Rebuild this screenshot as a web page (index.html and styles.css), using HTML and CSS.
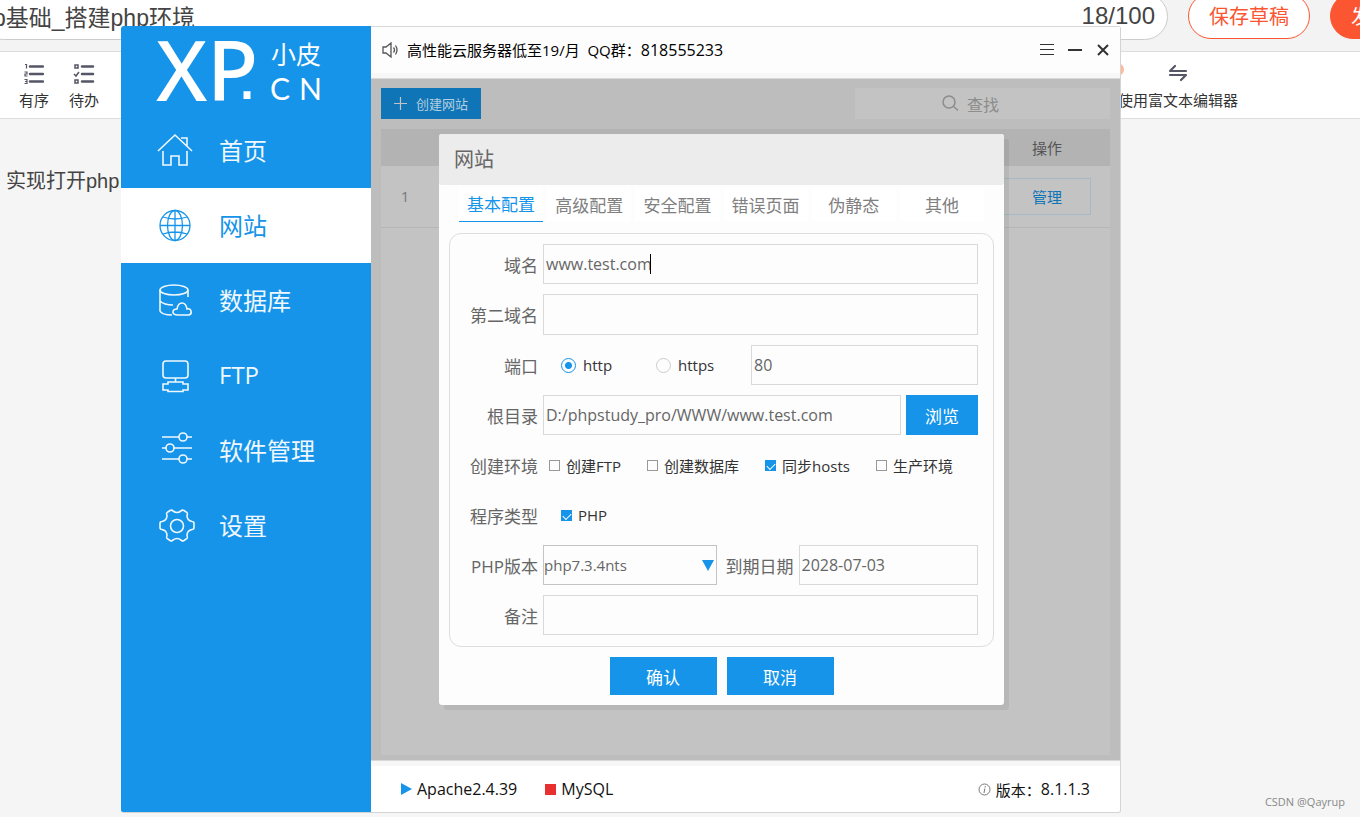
FILE: index.html
```html
<!DOCTYPE html>
<html lang="zh-CN">
<head>
<meta charset="utf-8">
<title>小皮面板 - 网站</title>
<link rel="stylesheet" href="styles.css">
</head>
<body>
<div class="editor">
  <header class="editor-head">
    <div class="title-box">
      <input class="title-input" type="text" aria-label="文章标题" value="p基础_搭建php环境">
      <span class="title-count">18/100</span>
    </div>
    <button class="pill" type="button">保存草稿</button>
    <button class="pill pill-solid" type="button">发布文章</button>
  </header>
  <div class="toolbar">
    <button class="tool" type="button">
      <svg width="20" height="22" viewBox="0 0 20 22" fill="none" stroke="#555666" stroke-width="2"><path d="M6 3.500h13M6 11h13M6 18.500h13" stroke-linecap="round" stroke-width="2.500"/><path d="M1 1.500h1.500v4M.5 9H3v2H1v2h2.500M.5 16.500H3v4H.5M1 18.500h2" stroke-width="1.200"/></svg>
      <span>有序</span>
    </button>
    <button class="tool" type="button">
      <svg width="22" height="22" viewBox="0 0 22 22" fill="none" stroke="#555666"><path d="M9 3.500h11M9 11h11M9 18.500h11" stroke-linecap="round" stroke-width="2.500"/><path d="M2 2h3v3H2zM2 17h3v3H2zM1 11l2 2 3-4" stroke-width="1.500"/></svg>
      <span>待办</span>
    </button>
    <i class="badge"></i>
    <button class="tool tool-switch" type="button">
      <svg width="20" height="22" viewBox="0 0 20 22" fill="none" stroke="#555666" stroke-width="2.200" stroke-linecap="round" stroke-linejoin="round"><path d="M18 8H2l5-5M2 12h16l-5 5"/></svg>
      <span>使用富文本编辑器</span>
    </button>
  </div>
  <p class="editor-text">实现打开php</p>
</div>

<div class="app">
  <aside class="side">
    <svg class="logo" viewBox="0 0 250 87" role="img" aria-label="XP.CN 小皮">
      <g fill="#fff">
        <text class="logo-xp" x="35 86" y="75">XP</text>
        <text class="logo-dot" x="116" y="73">.</text>
        <text class="logo-cjk" x="150" y="38">小皮</text>
        <text class="logo-cn" x="149 178" y="74">CN</text>
      </g>
    </svg>
    <nav class="nav">
      <a class="nav-item" href="#home">
        <svg class="nav-icon" viewBox="0 0 36 36"><path d="M1 19 18 3l17 16M6 19v14h8v-9h8v9h8V19M24 6h6v8"/></svg>
        首页
      </a>
      <a class="nav-item nav-on" href="#site">
        <svg class="nav-icon" viewBox="0 0 36 36"><circle cx="18" cy="18.500" r="15"/><ellipse cx="18" cy="18.500" rx="7.500" ry="15"/><path d="M18 3.500v30M3 18.500h30M6 10q12 4 24 0M6 27q12-4 24 0"/></svg>
        网站
      </a>
      <a class="nav-item" href="#db">
        <svg class="nav-icon" viewBox="0 0 36 36"><ellipse cx="17" cy="8" rx="14" ry="5"/><path d="M3 8v21q2 4 12 4M31 8v7M3 19q4 4 13 4M21 33h11q3-1 2-4-1-3-4-2-1-6-5-6t-5 6q-4 0-4 3t5 3z"/></svg>
        数据库
      </a>
      <a class="nav-item" href="#ftp">
        <svg class="nav-icon" viewBox="0 0 36 36"><rect x="6" y="4" width="25" height="17" rx="3"/><path d="M18.500 21v4M11 25h15v2h5v6h-5v1.500H11V33H6v-6h5z"/></svg>
        FTP
      </a>
      <a class="nav-item" href="#soft">
        <svg class="nav-icon" viewBox="0 0 36 36"><path d="M5 5h17M30 5h5M5 16h4M17 16h18M5 27h17M30 27h5"/><circle cx="26" cy="5" r="4"/><circle cx="13" cy="16" r="4"/><circle cx="26" cy="27" r="4"/></svg>
        软件管理
      </a>
      <a class="nav-item" href="#set">
        <svg class="nav-icon" viewBox="0 0 36 36"><circle cx="20" cy="19" r="6.500"/><path d="M13 3.500q2-1 3 .5 4 3 8 0 1-1.500 3-.5l3 2q1 1 0 3 0 5 5 6 2 0 2 2v4q0 2-2 2-5 1-5 6 1 2 0 3l-3 2q-2 1-3-.5-4-3-8 0-1 1.500-3 .5l-3-2q-1-1 0-3 0-5-5-6-2 0-2-2v-4q0-2 2-2 5-1 5-6-1-2 0-3z"/></svg>
        设置
      </a>
    </nav>
  </aside>

  <div class="main">
    <header class="topbar">
      <svg width="16" height="16" viewBox="0 0 16 16" fill="none" stroke="#555" stroke-width="1.300"><path d="M1 5h3l5-4v14l-5-4H1zM11.500 5.500q2 2.500 0 5M13.500 3.500q3 4.500 0 9" /></svg>
      <span class="notice">高性能云服务器低至19/月&nbsp; QQ群：<span class="num">818555233</span></span>
      <div class="win-buttons">
        <button class="win-button" type="button" aria-label="菜单"><svg width="14" height="14" viewBox="0 0 14 14" stroke="#333" stroke-width="1"><path d="M0 1.500h14M0 6.500h14M0 11.500h14"/></svg></button>
        <button class="win-button" type="button" aria-label="最小化"><svg width="14" height="14" viewBox="0 0 14 14" stroke="#333" stroke-width="2"><path d="M0 7h14"/></svg></button>
        <button class="win-button" type="button" aria-label="关闭"><svg width="14" height="14" viewBox="0 0 14 14" stroke="#333" stroke-width="2"><path d="m2 2 10 10M12 2 2 12"/></svg></button>
      </div>
    </header>

    <section class="content">
      <div class="actions">
        <button class="create" type="button">
          <svg width="13" height="13" viewBox="0 0 13 13" stroke="#c3c3c3" stroke-width="1.200"><path d="M6.500 0v13M0 6.500h13"/></svg>
          创建网站
        </button>
        <button class="search" type="button">
          <svg width="17" height="17" viewBox="0 0 17 17" fill="none" stroke="#8c8c8c" stroke-width="1.500"><circle cx="7" cy="7" r="6"/><path d="m11.500 11.500 4.500 4"/></svg>
          查找
        </button>
      </div>
      <div class="panel">
        <table class="sites">
          <thead><tr><th class="col-id"></th><th></th><th class="col-op">操作</th></tr></thead>
          <tbody><tr><td>1</td><td></td><td><button class="manage" type="button">管理</button></td></tr></tbody>
        </table>
      </div>

      <div class="modal" role="dialog" aria-labelledby="modal-title">
        <h2 class="modal-title" id="modal-title">网站</h2>
        <div class="tabs">
          <button class="tab tab-on" type="button">基本配置</button>
          <button class="tab" type="button">高级配置</button>
          <button class="tab" type="button">安全配置</button>
          <button class="tab" type="button">错误页面</button>
          <button class="tab" type="button">伪静态</button>
          <button class="tab" type="button">其他</button>
        </div>
        <form class="form">
          <div class="row">
            <label class="label" for="domain">域名</label>
            <div class="caret-box"><input class="field" id="domain" type="text" value="www.test.com"><i class="caret"></i></div>
          </div>
          <div class="row row-tall">
            <label class="label" for="domain2">第二域名</label>
            <input class="field" id="domain2" type="text">
          </div>
          <div class="row">
            <label class="label" for="port">端口</label>
            <div class="radios">
              <label class="choice choice-radio"><input class="radio" type="radio" name="proto" checked>http</label>
              <label class="choice choice-radio"><input class="radio" type="radio" name="proto">https</label>
            </div>
            <input class="field" id="port" type="text" value="80">
          </div>
          <div class="row">
            <label class="label" for="root">根目录</label>
            <input class="field" id="root" type="text" value="D:/phpstudy_pro/WWW/www.test.com">
            <button class="browse" type="button">浏览</button>
          </div>
          <div class="row">
            <span class="label">创建环境</span>
            <div class="checks">
              <label class="choice"><input class="check" type="checkbox">创建FTP</label>
              <label class="choice"><input class="check" type="checkbox">创建数据库</label>
              <label class="choice"><input class="check" type="checkbox" checked>同步hosts</label>
              <label class="choice"><input class="check" type="checkbox">生产环境</label>
            </div>
          </div>
          <div class="row">
            <span class="label">程序类型</span>
            <div class="checks checks-type">
              <label class="choice"><input class="check" type="checkbox" checked>PHP</label>
            </div>
          </div>
          <div class="row">
            <label class="label" for="php">PHP版本</label>
            <div class="select-box"><select class="field select" id="php"><option>php7.3.4nts</option></select></div>
            <label class="label label-date" for="expire">到期日期</label>
            <input class="field" id="expire" type="text" value="2028-07-03">
          </div>
          <div class="row">
            <label class="label" for="note">备注</label>
            <input class="field" id="note" type="text">
          </div>
        </form>
        <div class="modal-foot">
          <button class="confirm" type="button">确认</button>
          <button class="confirm" type="button">取消</button>
        </div>
      </div>
    </section>

    <footer class="status">
      <span class="service"><i class="run"></i>Apache2.4.39</span>
      <span class="service"><i class="stop"></i>MySQL</span>
      <span class="version"><svg width="13" height="13" viewBox="0 0 13 13" fill="none" stroke="#777"><circle cx="6.500" cy="6.500" r="5.500"/><path d="M7.200 3v1.500M6.800 5.500 6 10"/></svg>版本：<span class="num">8.1.1.3</span></span>
    </footer>
  </div>
</div>
<span class="watermark">CSDN @Qayrup</span>
</body>
</html>
```

FILE: styles.css
```css
* { box-sizing: border-box; }
html { height: 100%; }
body {
  margin: 0;
  height: 100%;
  position: relative;
  overflow: hidden;
  background: #f5f5f5;
  font-family: "Open Sans", "Noto Sans CJK SC", sans-serif;
  font-size: 15px;
  color: #333;
}
button, input, select { font: inherit; color: inherit; }
button { border: 0; padding: 0; background: none; cursor: pointer; white-space: nowrap; }

/* article editor behind the window */
.editor { overflow: hidden; font-family: "Liberation Sans", "Noto Sans CJK SC", sans-serif; }
.editor-head {
  display: flex;
  gap: 20px;
  margin: -7px -92px 0 -20px;
  padding-bottom: 11px;
  background: #f3f3f3;
}
.title-box {
  flex: 1;
  display: flex;
  align-items: center;
  height: 47px;
  padding: 0 12px 2px;
  border: 1px solid #ccc;
  border-radius: 24px;
  background: #fff;
  color: #444;
}
.title-input { flex: 1; min-width: 0; height: 44px; padding: 0; border: 0; background: none; font-size: 23px; }
.title-count { font-size: 24px; }
.pill {
  width: 122px;
  height: 46px;
  padding-bottom: 2px;
  border: 1px solid #fc5531;
  border-radius: 23px;
  background: #fff;
  color: #fc5531;
  font-size: 20px;
}
.pill-solid { background: #fc5531; color: #fff; }
.toolbar {
  position: relative;
  display: flex;
  align-items: center;
  height: 68px;
  padding: 2px 122px 0 9px;
  border: solid #ddd;
  border-width: 1px 0;
  background: #fff;
}
.tool { display: flex; flex-direction: column; align-items: center; gap: 4px; width: 50px; }
.tool-switch { width: auto; margin-left: auto; }
.badge { position: absolute; right: 236px; top: 11px; width: 13px; height: 13px; border-radius: 50%; background: #ffb999; }
.editor-text { margin: 46px 6px; font-size: 20px; color: #444; }
.watermark { position: absolute; right: 15px; bottom: 8px; font-size: 11px; color: #888; }

/* window */
.app {
  position: absolute;
  inset: 26px 239px 4px 121px;
  display: flex;
  border: solid #d4d4d4;
  border-width: 0 1px 1px 0;
  border-radius: 3px;
  overflow: hidden;
  background: #fdfdfd;
}
.side { flex: 0 0 250px; background: #1694e9; }
.logo { display: block; width: 250px; height: 87px; }
.logo-xp { font: 500 84px "Noto Sans", sans-serif; }
.logo-dot { font: 72px "Liberation Sans", sans-serif; }
.logo-cjk { font: 25px "Noto Sans CJK SC", sans-serif; }
.logo-cn { font: 30px Lato, sans-serif; }
.nav-item {
  display: flex;
  align-items: center;
  gap: 26px;
  height: 75px;
  padding: 0 0 2px 36px;
  color: #f0f8fe;
  font-size: 24px;
  text-decoration: none;
}
.nav-icon { width: 36px; height: 36px; fill: none; stroke: currentColor; stroke-width: 1.6; overflow: visible; }
.nav-on { background: #fff; color: #1694e9; }
.nav-on .nav-icon { stroke-width: 1.3; }

.main { flex: 1; min-width: 0; display: flex; flex-direction: column; }
.topbar {
  display: flex;
  align-items: center;
  gap: 9px;
  height: 53px;
  padding: 0 10px 6px 11px;
  border: solid #d8d8d8;
  border-width: 1px 0;
  background: linear-gradient(#fdfdfd 46px, #f7f7f7 46px);
  color: #000;
}
.num { font-size: 16px; }
.win-buttons { display: flex; gap: 14px; margin-left: auto; }
.win-button { display: flex; }

.content { flex: 1; display: flex; flex-direction: column; position: relative; padding: 9px 10px 5px; background: #bdbdbd; }
.actions { display: flex; justify-content: space-between; height: 31px; margin-bottom: 10px; }
.create {
  display: flex;
  align-items: center;
  justify-content: center;
  gap: 9px;
  width: 100px;
  background: #1075b6;
  color: #b4cfe0;
  font-size: 13px;
}
.search {
  display: flex;
  align-items: center;
  justify-content: center;
  gap: 8px;
  width: 255px;
  padding-right: 24px;
  background: #c3c3c3;
  color: #8c8c8c;
  font-size: 16px;
}
.panel { flex: 1; background: #c3c3c3; }
.sites { width: 100%; border-collapse: collapse; text-align: center; color: #7a7a7a; }
.sites th { height: 37px; padding: 0; background: #b3b3b3; color: #555; font-weight: 400; }
.sites td { height: 61px; padding: 0; border-bottom: 1px solid #b6b6b6; }
.col-id { width: 48px; }
.col-op { width: 126px; }
.manage { width: 88px; height: 37px; border: 1px solid #a6b9c6; color: #1075b6; }

/* dialog */
.modal {
  position: absolute;
  top: 55px;
  left: 68px;
  width: 565px;
  border-radius: 3px;
  background: #fdfdfd;
  box-shadow: 5px 5px 0 rgba(0, 0, 0, .06);
}
.modal-title {
  margin: 0;
  padding-left: 15px;
  border-radius: 3px;
  background: #ececec;
  color: #666;
  font-size: 20px;
  font-weight: 400;
  line-height: 51px;
}
.tabs { display: flex; gap: 4px; padding: 2px 20px 11px; }
.tab { flex: 1; height: 35px; padding-bottom: 1px; background: #fff; color: #808080; font-size: 17px; }
.tab-on { border-bottom: 1px solid #1694e9; color: #1694e9; }
.form {
  display: flex;
  flex-direction: column;
  gap: 10px;
  margin: 0 10px;
  padding: 10px 15px 11px 10px;
  border: 1px solid #ddd;
  border-radius: 12px;
}
.row { display: flex; align-items: center; height: 40px; }
.row-tall { height: 41px; }
.label { flex: 0 0 78px; margin-right: 5px; color: #666; font-size: 17px; text-align: right; white-space: nowrap; }
.label-date { flex-basis: 68px; margin-left: 9px; }
.field {
  flex: 1;
  min-width: 0;
  width: 100%;
  height: 40px;
  padding: 0 2px;
  border: 1px solid #d9d9d9;
  border-radius: 0;
  background: #fdfdfd;
  color: #666;
  font-size: 16px;
  outline: 0;
}
.row-tall .field { height: 41px; }
.caret-box, .select-box { flex: 1; position: relative; display: flex; }
.caret { position: absolute; left: 107px; top: 10px; width: 1px; height: 20px; background: #000; }
.select { appearance: none; padding: 0; border-color: #c4c4c4; font-size: 15px; }
.select-box::after {
  content: "";
  position: absolute;
  right: 3px;
  top: 15px;
  border: solid transparent;
  border-width: 11px 6px 0;
  border-top-color: #1694e9;
}
.radios { display: flex; padding-left: 18px; }
.choice { display: flex; align-items: center; gap: 6px; white-space: nowrap; }
.choice-radio { width: 95px; gap: 7px; }
.checks { display: flex; gap: 26px; padding-left: 6px; }
.checks-type { padding-left: 18px; }
.radio {
  appearance: none;
  width: 15px;
  height: 15px;
  margin: 0;
  border: 1px solid #ccc;
  border-radius: 50%;
}
.radio:checked { border-color: #1694e9; background: radial-gradient(#1694e9 3px, transparent 4px); }
.check {
  appearance: none;
  display: grid;
  place-items: center;
  width: 11px;
  height: 11px;
  margin: 0;
  border: 1px solid #999;
}
.check:checked { border-color: #1694e9; background: #1694e9; }
.check:checked::before {
  content: "";
  width: 7px;
  height: 4px;
  border: solid #fff;
  border-width: 0 0 1px 1px;
  rotate: -45deg;
}
.browse { width: 72px; height: 40px; margin-left: 5px; background: #1694e9; color: #fff; font-size: 17px; }
.modal-foot { display: flex; justify-content: center; gap: 10px; padding: 10px; }
.confirm { width: 107px; height: 38px; background: #1694e9; color: #fff; font-size: 17px; }

.status {
  display: flex;
  align-items: center;
  gap: 28px;
  height: 52px;
  padding: 5px 30px 0;
  border-top: 1px solid #d8d8d8;
  background: linear-gradient(#f7f7f7 5px, #fff 5px);
  color: #111;
}
.service { display: flex; align-items: center; gap: 5px; font-size: 16px; }
.run { border: solid transparent; border-width: 6px 0 6px 11px; border-left-color: #1694e9; }
.stop { width: 11px; height: 11px; background: #e83030; }
.version { display: flex; align-items: center; margin-left: auto; }
.version svg { margin-right: 5px; }
```
